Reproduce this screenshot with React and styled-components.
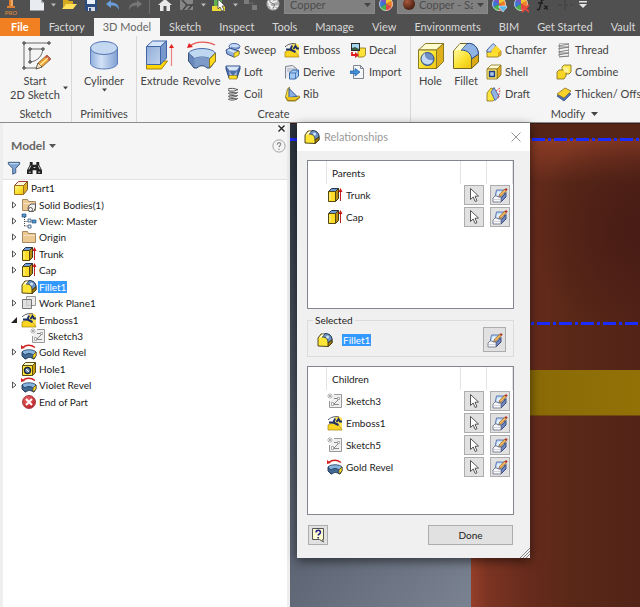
import React from 'react';
import styled, { createGlobalStyle } from 'styled-components';

const GlobalStyle = createGlobalStyle`
  * {
    box-sizing: border-box;
  }
  body {
    margin: 0;
    font-family: Lato, "Open Sans", sans-serif;
    font-size: 11px;
    line-height: 14px;
    color: #444;
  }
  button, select {
    font: inherit;
    color: inherit;
    border: none;
    background: none;
    padding: 0;
    margin: 0;
  }
`

const Page = styled.div`
  display: flex;
  flex-direction: column;
  min-height: 100vh;
  overflow: hidden;
`

const Svg = styled.svg`
  display: block;
  flex: none;
`

/* ---------- icons ---------- */

const Icon = ({ size = 16, box = 16, children }) => (
  <Svg width={size} height={size} viewBox={`0 0 ${box} ${box}`} aria-hidden="true">{children}</Svg>
)

const Caret = ({ color = '#444', width = 7 }) => (
  <Svg width={width} height="4" viewBox="0 0 7 4" aria-hidden="true"><path d="M0 0h7L3.5 4z" fill={color} /></Svg>
)

const Gradients = () => (
  <Svg width="0" height="0" aria-hidden="true">
    <defs>
      <linearGradient id="blue" x1="0" y1="0" x2="1" y2="0">
        <stop offset="0" stopColor="#8fb0de" />
        <stop offset="0.4" stopColor="#d3e2f6" />
        <stop offset="1" stopColor="#7f9fd2" />
      </linearGradient>
      <linearGradient id="steel" x1="0" y1="0" x2="1" y2="1">
        <stop offset="0" stopColor="#8fadd8" />
        <stop offset="1" stopColor="#c0d2ec" />
      </linearGradient>
      <linearGradient id="gold" x1="0" y1="0" x2="1" y2="1">
        <stop offset="0" stopColor="#fff79a" />
        <stop offset="0.5" stopColor="#fbe334" />
        <stop offset="1" stopColor="#eec40c" />
      </linearGradient>
      <radialGradient id="ball" cx="0.35" cy="0.3" r="0.8">
        <stop offset="0" stopColor="#a8593c" />
        <stop offset="1" stopColor="#3c160c" />
      </radialGradient>
      <radialGradient id="red" cx="0.4" cy="0.35" r="0.7">
        <stop offset="0" stopColor="#ef6a6a" />
        <stop offset="1" stopColor="#b41c24" />
      </radialGradient>
    </defs>
  </Svg>
)

const SketchBig = () => (
  <Icon size={30} box={30}>
    <path d="M3 3h25M3 3v25h12M9 9h13M9 9v13M22 9c-1 7-5 12-13 13" fill="none" stroke="#666" />
    <path d="M2 2h2v2H2zM27 2h2v2h-2zM2 27h2v2H2zM8 8h2v2H8zM21 8h2v2h-2zM8 21h2v2H8z" fill="#fff" stroke="#333" />
    <path d="M15 29l2-6 9-8 4 4-9 8z" fill="#f0a030" stroke="#6a5030" strokeWidth="0.7" />
    <path d="M24 17l2-2 4 4-2 2z" fill="#c85a48" />
    <path d="M15 29l2-6 4 4z" fill="#f6e2c0" stroke="#444" strokeWidth="0.7" />
    <path d="M19 25l8-7" stroke="#fff0a8" strokeWidth="1.400" />
  </Icon>
)

const CylinderBig = () => (
  <Icon size={30} box={30}>
    <path d="M1.500 8v15c0 3.500 6 6 13.500 6s13.500-2.500 13.500-6V8" fill="url(#blue)" stroke="#5a7cb8" />
    <ellipse cx="15" cy="8" rx="13.500" ry="6.500" fill="#c4d8f2" stroke="#5273b0" />
  </Icon>
)

const ExtrudeBig = () => (
  <Icon size={30} box={30}>
    <path d="M1.500 25l6-4h15l-6 8h-15z" fill="#ffd600" stroke="#a08010" />
    <path d="M1.500 6.500h14v18h-14z" fill="url(#steel)" stroke="#3f64a8" />
    <path d="M1.500 6.500l6-5.500h14l-6 5.500z" fill="#d6e6fa" stroke="#3f64a8" />
    <path d="M15.500 6.500l6-5.500v17l-6 6.500z" fill="#7898cc" stroke="#3f64a8" />
    <path d="M26.500 26V7" stroke="#f08080" strokeWidth="1.200" />
    <path d="M26.500 4l2.500 4h-5z" fill="#e02020" />
  </Icon>
)

const RevolveBig = () => (
  <Icon size={30} box={30}>
    <path d="M1.500 13v8l5.500 7h3c3-3 7-3 10 0h3l5.500-7v-8z" fill="#6788b8" stroke="#35517e" />
    <path d="M1.500 13c4-6 23-6 27 0l-6 5.500c-4-2-11-2-15 0z" fill="#c0d7f2" stroke="#4a6ca8" />
    <path d="M7.500 18.500c4-2 11-2 15 0V27h-3c-3-3-6-3-9 0h-3z" fill="#7c9bc8" />
    <path d="M22.500 19l6-6v8l-6 7z" fill="#ffd91a" stroke="#8a7820" />
    <path d="M3 6c6-5 18-5 25-1" fill="none" stroke="#e85a5a" strokeWidth="1.300" />
    <path d="M0 8l2-5 4 4z" fill="#e02020" />
  </Icon>
)

const HoleBig = () => (
  <Icon size={28} box={28}>
    <path d="M1.500 8l7-6.500h18l-7 6.500z" fill="#fffbd0" stroke="#8a7a20" />
    <path d="M19.500 8l7-6.500v18l-7 7z" fill="#dfaf1c" stroke="#8a7a20" />
    <path d="M1.500 8h18v18.500h-18z" fill="url(#gold)" stroke="#8a7a20" />
    <circle cx="10.500" cy="17" r="6.500" fill="#6d8fc6" stroke="#2c4a86" />
    <path d="M8 11c-1 5 4 8 8 7-1 5-8 6-11 1-1-3 0-6 3-8z" fill="#c4d9f4" />
  </Icon>
)

const FilletBig = () => (
  <Icon size={28} box={28}>
    <path d="M1.500 26.500V9L8 1.500h10c5 1 8 5 8.500 10v8l-7 7z" fill="#ffee44" stroke="#6f6524" />
    <path d="M19.500 26.500V17l7-5v8z" fill="#dba916" stroke="#6f6524" />
    <path d="M9 8l6-6.500c7-1 11 4 11.500 10.500l-7 5c0-5-4-9-10.500-9z" fill="#8fb3e2" stroke="#27488c" />
    <path d="M2 9l6-7h6L9 8z" fill="#fffdd8" />
    <path d="M2 26V10c9-3 16 1 17 8v8z" fill="url(#gold)" />
  </Icon>
)

const Sweep = () => (
  <Icon>
    <path d="M4 4.500c0-4 10-4 11 0l-1 2-5 1-4-1z" fill="#c9dcf6" stroke="#4261a4" />
    <path d="M6 5c2 1.500 6 1.500 8 0" fill="none" stroke="#5a7aba" />
    <path d="M1 8l4-2 9 3v3l-5 3-7-3z" fill="#8faedc" stroke="#35508c" />
    <path d="M2 8l3-1 7 3-3 1z" fill="#d3e3f8" />
    <path d="M9 11l5-2v4l-5 2.500z" fill="#ffe02a" stroke="#8b7420" strokeWidth="0.700" />
  </Icon>
)
const Loft = () => (
  <Icon>
    <path d="M1 2h14v3l-3 9H4L1 5z" fill="#4e6ea8" stroke="#304c88" />
    <path d="M1.500 2.500h13l-3 4h-7z" fill="#d7e5f8" />
    <path d="M4 7l4 5 4-5-1 7H5z" fill="#9fbce6" />
    <path d="M4 11.500h8V15H4z" fill="#ffdf25" stroke="#8b7420" strokeWidth="0.700" />
  </Icon>
)
const Coil = () => (
  <Icon>
    <path d="M3 4c3 2 8 1 10-1M3 7c3 2 8 1 10-1M3 10c3 2 8 1 10-1M3 13c3 2 8 1 10-1M3 3c2-1 7-1 10 1M4 6l8 1M4 9l8 1M4 12l8 1" fill="none" stroke="#555" />
  </Icon>
)
const Emboss = () => (
  <Icon>
    <path d="M8 2c3-1 5-.5 7 1v12c-1-4-4-6-8-7z" fill="#ffe452" />
    <path d="M1 15V10c3-2 6-2 9-.5 3 1.500 4 3 5 5.500z" fill="#fbd51e" stroke="#a58212" strokeWidth="0.700" />
    <path d="M1 5c3-3 7-4 11-3" fill="none" stroke="#3a4050" strokeWidth="0.900" />
    <path d="M2 7.500h4.500L8 3.500M6.500 7.500l5 2.500M9.500 7l2-3 1.500 2.500h2" fill="none" stroke="#1f3064" strokeWidth="2" />
  </Icon>
)
const Derive = () => (
  <Icon>
    <path d="M1.500 14.500v-12l7-1 4 3v3" fill="#e6eaf0" stroke="#7d8590" />
    <path d="M3 5h9M3 7h4" stroke="#a4acb8" />
    <path d="M5.500 9l3-3h6v6l-3 3h-6z" fill="#a5caf2" stroke="#3468ac" />
    <path d="M5.500 9h6v6M11.500 9l3-3" fill="none" stroke="#3468ac" strokeWidth="0.800" />
  </Icon>
)
const Rib = () => (
  <Icon>
    <path d="M1.500 11l2-8 2-2v10l10-1v2l-4 3h-8z" fill="#ffe238" stroke="#86701c" strokeWidth="0.800" />
    <path d="M5 2.500l8 8-8 1z" fill="#8db0e2" stroke="#2f559c" />
    <path d="M1.500 11l2.500 3.500h7l4-3" fill="#f1c51a" stroke="#86701c" strokeWidth="0.800" />
  </Icon>
)
const Decal = () => (
  <Icon>
    <path d="M8 8l2-2h5.500v7l-2 2H8z" fill="#ffe238" stroke="#86701c" strokeWidth="0.800" />
    <rect x="1.500" y="1.500" width="8" height="7" fill="#a4d8f0" stroke="#2b2b2b" />
    <path d="M2 8V6l3-1 4 2v1z" fill="#3c5c44" />
    <path d="M2 10v3h4" fill="none" stroke="#dc2020" strokeWidth="1.800" />
    <path d="M5 10l4 3-4 3z" fill="#dc2020" />
  </Icon>
)
const Import = () => (
  <Icon>
    <path d="M3.500 1.500h7l3 3v10h-10z" fill="#f4f6fa" stroke="#7d8590" />
    <path d="M10.500 1.500v3h3" fill="none" stroke="#7d8590" />
    <path d="M0 7h5V4.500L10 8l-5 4V9.500H0z" fill="#3f8fd8" stroke="#1d5ca0" strokeWidth="0.700" />
  </Icon>
)
const Chamfer = () => (
  <Icon>
    <path d="M1 8l5-5 4 1 5 5v4l-3 2H1z" fill="#ffe030" stroke="#86701c" strokeWidth="0.800" />
    <path d="M1 8l6-6.500 3 2.500-5 6H1z" fill="#b9d0f0" stroke="#35549a" strokeWidth="0.800" />
    <path d="M5 9l5-5.500 5 5-3 2.500H8z" fill="#ffd92a" />
    <path d="M12 11l3-2.500V13l-3 2z" fill="#dba81a" />
  </Icon>
)
const Shell = () => (
  <Icon>
    <path d="M1 5l4-4h10l-4 4z" fill="#fffbd0" stroke="#86701c" strokeWidth="0.800" />
    <path d="M11 5l4-4v10l-4 4z" fill="#e0ab1c" stroke="#86701c" strokeWidth="0.800" />
    <path d="M1 5h10v10H1z" fill="#ffe96a" stroke="#86701c" strokeWidth="0.800" />
    <path d="M3.500 7.500h5v5h-5z" fill="#a8c5ee" stroke="#213f80" strokeWidth="1.400" />
  </Icon>
)
const Draft = () => (
  <Icon>
    <path d="M1 15V7l4-5 3 1 2 9-3 3z" fill="#ffe540" stroke="#86701c" strokeWidth="0.800" />
    <path d="M5 6l3-4.500 5 9-4 4z" fill="#93b4e4" stroke="#35549a" strokeWidth="0.800" />
    <path d="M10 5l4-3M12 12l2-8" stroke="#e04040" strokeDasharray="2 1" />
  </Icon>
)
const Thread = () => (
  <Icon>
    <path d="M3.500 1.500h9v13h-9z" fill="#f2f2f2" stroke="#999" strokeWidth="0.700" />
    <path d="M2 4l11-2M2 7l11-2M2 10l11-2M2 13l11-2M3 15l10-1M3 5l10 0M3 11h10" stroke="#777" strokeWidth="0.900" />
  </Icon>
)
const Combine = () => (
  <Icon>
    <path d="M6 3l2-2h7v7l-2 2H6z" fill="#ffe74c" stroke="#7c6a1c" strokeWidth="0.800" />
    <path d="M1 8l2-2h7v6l-2 3H1z" fill="#f8d422" stroke="#7c6a1c" strokeWidth="0.800" />
    <path d="M6.500 3.500h6v5h-4z" fill="#fff394" />
  </Icon>
)
const Thicken = () => (
  <Icon>
    <path d="M1 10l7-5 7 3-7 7z" fill="#4e70b4" stroke="#2e4a86" strokeWidth="0.800" />
    <path d="M1 8l8-6 6 3-7 7z" fill="#fbd22c" stroke="#86701c" strokeWidth="0.800" />
  </Icon>
)

const Part = () => (
  <Icon>
    <path d="M1.500 5.500l4-4h9l-4 4z" fill="#fff6dc" stroke="#a03a30" />
    <path d="M10.500 5.500l4-4v8l-4 5z" fill="#e0b020" stroke="#7a5a20" />
    <path d="M1.500 5.500h9v9h-9z" fill="url(#gold)" stroke="#a07020" />
  </Icon>
)
const Folder = ({ bodies }) => (
  <Icon>
    <path d="M1.500 13.500v-11h5l1 2h7v9z" fill="#ecc992" stroke="#a88a62" />
    <path d="M2 6.500h12" stroke="#f8e4c4" />
    {bodies && <path d="M7.500 9l2.500-2h4.500v4l-2 3.500H8l-1-3z" fill="#f0f0f0" stroke="#555" />}
    {bodies && <circle cx="9.500" cy="12.500" r="2" fill="#fff" stroke="#555" />}
  </Icon>
)
const ViewTree = () => (
  <Icon>
    <path d="M3.500 4v9M3.500 8.500h5M3.500 13h4" stroke="#444" strokeDasharray="1 1" fill="none" />
    <path d="M1 1h4v3H1zM11 7h4v3h-4z" fill="#4a9ad8" stroke="#2b4f78" strokeWidth="0.700" />
    <path d="M7 6h3v3H7zM7 12h3v3H7z" fill="#e8f0fa" stroke="#2b4f78" strokeWidth="0.800" />
  </Icon>
)
const Extrude = () => (
  <Icon>
    <path d="M1.500 4.500l3-3h7l-3 3z" fill="#6f9bd4" stroke="#23354e" />
    <path d="M8.500 4.500l3-3v10l-3 3z" fill="#b78a12" stroke="#453a10" />
    <path d="M1.500 4.500h7v10h-7z" fill="#ffdd28" stroke="#554812" />
    <path d="M3 6v7" stroke="#fff6a0" />
    <path d="M13.500 14V4" stroke="#c02020" />
    <path d="M13.500 1l2 4h-4z" fill="#c81818" />
  </Icon>
)
const Fillet = () => (
  <Icon>
    <path d="M1 14V6l3-4h6c3 1 5 3 5 6v3l-4 3.500z" fill="#ffe636" stroke="#3c3510" strokeWidth="0.900" />
    <path d="M5 5l3-3.500c4 0 7 2 7 6.500l-4 3c0-4-2-6-6-6z" fill="#6d94c4" stroke="#1c2c48" strokeWidth="0.900" />
    <path d="M11 14.500V11l4-3v3z" fill="#a97f10" stroke="#3c3510" strokeWidth="0.900" />
    <path d="M2 6l3-3.500h2L5 5z" fill="#fff" />
    <circle cx="10.500" cy="5" r="1.500" fill="#d0e2f4" />
  </Icon>
)
const WorkPlane = () => (
  <Icon>
    <path d="M5.500 1.500h9v9h-9z" fill="#ececec" stroke="#999" />
    <path d="M1.500 4.500h9v9h-9z" fill="#d4d4d4" fillOpacity="0.700" stroke="#777" />
  </Icon>
)
const SketchSmall = () => (
  <Icon>
    <path d="M7 1.500h7.500v13h-12V8" fill="#f0f0f0" stroke="#999" />
    <path d="M6 11.500h6M7 11l5-5M7 5.500h5" stroke="#888" fill="none" />
    <path d="M1 1l4 4M5 1L1 5M3 0v6M0 3h6" stroke="#a4a4a4" strokeWidth="0.800" />
    <path d="M4.500 9.500h2v3h-2zM10.500 4.500h2v2h-2z" fill="#fff" stroke="#999" strokeWidth="0.800" />
  </Icon>
)
const Revolve = () => (
  <Icon>
    <path d="M1 8v4l3 3h1c2-2 5-2 7 0h1l2-3V8z" fill="#416994" stroke="#1c2f4c" strokeWidth="0.900" />
    <path d="M1 8c2-3 12-3 14 0l-3 3c-2-2-6-2-8 0z" fill="#86b4de" stroke="#213a5c" strokeWidth="0.800" />
    <path d="M12 11l3-3v4l-3 3z" fill="#ffdf30" stroke="#584c14" strokeWidth="0.700" />
    <path d="M2 3.500c3-3 8-3 12 0" stroke="#d02020" strokeWidth="1.500" fill="none" />
    <path d="M0 5V1l4 3z" fill="#d02020" />
  </Icon>
)
const Hole = () => (
  <Icon>
    <path d="M1.500 4.500l3-3h10l-3 3z" fill="#fffbc8" stroke="#5b4f14" />
    <path d="M11.500 4.500l3-3v10l-3 3z" fill="#cc9c14" stroke="#5b4f14" />
    <path d="M1.500 4.500h10v10h-10z" fill="#ffe636" stroke="#5b4f14" />
    <circle cx="6.500" cy="9.500" r="3" fill="#7e9cc4" stroke="#1b2538" strokeWidth="1.400" />
    <path d="M5 8l3 3" stroke="#fff" />
  </Icon>
)
const EndOfPart = () => (
  <Icon>
    <circle cx="8" cy="8" r="6.500" fill="url(#red)" stroke="#a8484c" />
    <path d="M5 5l6 6M11 5l-6 6" stroke="#fff" strokeWidth="2" />
  </Icon>
)
const Filter = () => (
  <Icon size={14}>
    <path d="M1.500 1.500h13v2L10 8.500v5L6.500 15V8.500L1.500 3.500z" fill="#7fa6d4" stroke="#35527c" />
    <path d="M3 3h10" stroke="#d5e5f6" />
  </Icon>
)
const Binoculars = () => (
  <Icon size={15}>
    <path d="M3 2h3v3h4V2h3v3l3 6v4h-6v-4H6v4H0v-4l3-6z" fill="#222" />
    <path d="M2 10l2-4M14 10l-2-4M7 8h2M2 13h2M12 13h2" stroke="#ddd" />
  </Icon>
)
const Cursor = () => (
  <Icon>
    <path d="M4.500 1.500v11l2.700-2.500 2 4.500 1.800-.8-2-4.400 3.500-.3z" fill="#fff" stroke="#444" strokeWidth="0.900" strokeLinejoin="round" />
  </Icon>
)
const EditFeature = () => (
  <Icon>
    <path d="M4.500 3h8v6l-3 1H3z" fill="#b4d3f6" stroke="#5570ac" strokeWidth="0.900" />
    <path d="M5.500 4.500h4l-1 4h-4z" fill="#e4f0fc" />
    <path d="M9 11l5-5.500V10l-5 5z" fill="#7388bc" stroke="#304480" strokeWidth="0.900" />
    <path d="M1 11l2-2h2l1 1h3v5H1z" fill="#fafafc" stroke="#74798f" strokeWidth="0.900" />
    <path d="M2 12.500h6" stroke="#d0d2dc" />
    <path d="M7 9.500l.7-2.500L13 2l1.700 1.500L9.500 9z" fill="#f2b45a" stroke="#7a5524" strokeWidth="0.600" />
    <path d="M12.500 2.500L14 1l1.700 1.500L14.200 4z" fill="#b3362c" />
  </Icon>
)

const QuickSvg = ({ children }) => (
  <Svg width="16" height="14" viewBox="0 0 16 14" aria-hidden="true">{children}</Svg>
)

const Wheel = ({ children }) => (
  <QuickSvg>
    <path d="M8 4V-3A7 7 0 0 1 14 1z" fill="#f2c62c" />
    <path d="M8 4V-3A7 7 0 0 0 2 1z" fill="#7855c4" />
    <path d="M8 4l6-3.500a7 7 0 0 1 0 7z" fill="#f07e28" />
    <path d="M8 4l6 3.500A7 7 0 0 1 8 11z" fill="#e04848" />
    <path d="M8 4v7a7 7 0 0 1-6-3.500z" fill="#48b14c" />
    <path d="M8 4L2 7.500a7 7 0 0 1 0-7z" fill="#3a78d4" />
    <circle cx="8" cy="4" r="6.500" fill="none" stroke="#d8d8d8" strokeWidth="0.800" />
    {children}
  </QuickSvg>
)

/* ---------- quick access bar ---------- */

const QuickBar = styled.div`
  display: flex;
  height: 18px;
  overflow: hidden;
  background: #505050;
`

const QuickButton = styled.button`
  flex: none;
  display: flex;
  justify-content: center;
  width: ${p => p.$narrow ? 10 : 22}px;
  ${p => p.$narrow && 'align-items: center;'}
  height: ${p => p.$narrow ? 10 : 18}px;
`

const Logo = styled.div`
  display: flex;
  flex-direction: column;
  align-items: center;
  flex: none;
  width: 22px;
  margin-right: 4px;
  font-size: 6px;
  font-weight: bold;
  line-height: 8px;
  color: #c98040;
`

const Divider = styled.div`
  flex: none;
  width: 1px;
  height: 14px;
  margin: 0 4px 0 3px;
  background: #6e6e6e;
`

const PickerWrap = styled.label`
  flex: none;
  display: flex;
  align-items: center;
  gap: 4px;
  width: 91px;
  height: 14px;
  padding: 0 3px 4px 5px;
  border: 1px solid #8a8a8a;
  border-top: none;
  background: #808080;
`

const Picker = styled.select`
  flex: 1;
  min-width: 0;
  height: 12px;
  line-height: 12px;
  appearance: none;
  color: #4c4c4c;
`

const QuickAccess = () => (
  <QuickBar>
    <Logo>
      <Svg width="10" height="9" viewBox="0 0 10 9" aria-hidden="true">
        <path d="M3 0h4v6h2v2H1V6h2z" fill="#d98032" />
        <path d="M5 0h2v6H5z" fill="#f0a860" />
      </Svg>
      PRO
    </Logo>
    <QuickButton aria-label="New"><QuickSvg><path d="M1 0h11l3 3v7.500H1z" fill="#e8ecf0" /><path d="M12 0v3h3" fill="#a8b0b8" /></QuickSvg></QuickButton>
    <QuickButton $narrow aria-label="New options"><Caret color="#bbb" width={5} /></QuickButton>
    <QuickButton aria-label="Open"><QuickSvg><path d="M2 0h5l1 1h4v4H4l-2 4z" fill="#d8a820" /><path d="M1 9l4-5h11l-4 5z" fill="#ffe15a" /></QuickSvg></QuickButton>
    <QuickButton aria-label="Save"><QuickSvg><path d="M2 0h12v11H3l-1-1z" fill="#2c4d80" /><path d="M4 0h8v4H4z" fill="#eaf1fa" /><path d="M5 7h7v4H5z" fill="#d5dce6" /><path d="M6 8h2v3H6z" fill="#2c4d80" /></QuickSvg></QuickButton>
    <QuickButton aria-label="Undo"><QuickSvg><path d="M1 4l5-4v2.500c5 0 8 2 8 7.500-2-4-4-4.500-8-4.500V8z" fill="#6a9fdc" /></QuickSvg></QuickButton>
    <QuickButton aria-label="Redo"><QuickSvg><path d="M15 4l-5-4v2.500c-5 0-8 2-8 7.500 2-4 4-4.500 8-4.500V8z" fill="#777" /></QuickSvg></QuickButton>
    <Divider />
    <QuickButton aria-label="Home"><QuickSvg><path d="M1 5l7-6 7 6h-2v6h-3.500V6h-3v5H3V5z" fill="#e9e9e9" /></QuickSvg></QuickButton>
    <QuickButton aria-label="Appearance"><QuickSvg><path d="M1 0h13v10H1z" fill="#858585" /><path d="M3 0l5 5-4 5M8 5h6M9 10l5-6" stroke="#444" strokeWidth="1.500" fill="none" /></QuickSvg></QuickButton>
    <QuickButton $narrow aria-label="Appearance options"><Caret color="#bbb" width={5} /></QuickButton>
    <QuickButton aria-label="Select"><QuickSvg><path d="M1 6h13v5H1z" fill="#ecd93a" /><path d="M3 0h8v6H3z" fill="#62b052" /><path d="M7 0v9l2-2 2 4 2-1-2-4h3L8 0z" fill="#fff" stroke="#333" strokeWidth="0.700" /></QuickSvg></QuickButton>
    <QuickButton $narrow aria-label="Select options"><Caret color="#bbb" width={5} /></QuickButton>
    <QuickButton aria-label="Links"><QuickSvg><path d="M1 0h5v4H1zM9 5h5v5H9z" fill="#7b7b7b" /><path d="M6 3h4v3" fill="none" stroke="#6a6a6a" /></QuickSvg></QuickButton>
    <QuickButton aria-label="Adjust"><QuickSvg><circle cx="8" cy="4" r="6.500" fill="#b0b0b0" /><path d="M3 1l4 8M8-1l-4 6 7 4M12 1l-6 2M13 6l-6 1" stroke="#f2f2f2" strokeWidth="1.400" fill="none" /><path d="M5 2l5 3-2 3" stroke="#777" fill="none" /></QuickSvg></QuickButton>
    <PickerWrap>
      <Picker aria-label="Material" defaultValue="Copper"><option>Copper</option></Picker>
      <Caret color="#444" />
    </PickerWrap>
    <QuickButton aria-label="Appearance browser"><Wheel /></QuickButton>
    <PickerWrap>
      <Svg width="12" height="12" viewBox="0 0 12 12" aria-hidden="true"><circle cx="6" cy="5" r="6" fill="url(#ball)" /></Svg>
      <Picker aria-label="Appearance" defaultValue="Copper - Sa"><option>Copper - Sa</option></Picker>
      <Caret color="#444" />
    </PickerWrap>
    <QuickButton aria-label="Adjust appearance"><Wheel><path d="M8 6h8v2h-1l-3 4-3-4H8z" fill="#58b8ec" stroke="#fff" strokeWidth="0.500" /></Wheel></QuickButton>
    <QuickButton aria-label="Clear appearance"><Wheel><path d="M9 5l7 7M16 5l-7 7" stroke="#e8483c" strokeWidth="1.800" /></Wheel></QuickButton>
    <QuickButton aria-label="Parameters"><QuickSvg><path d="M9 0C6-1 6 3 5 7s-2 3-3 2M3 3h5M9 6c2-1 2 4 4 3M13 6l-4 3" fill="none" stroke="#1e1e1e" strokeWidth="1.300" /></QuickSvg></QuickButton>
    <QuickButton aria-label="Add"><QuickSvg><path d="M8 0v11M1 5h14" stroke="#3f3f3f" strokeDasharray="4 2" /></QuickSvg></QuickButton>
    <QuickButton aria-label="Customize"><QuickSvg><path d="M0 1h8v1.500H0zM0 4h8L4 8z" fill="#e6e6e6" /></QuickSvg></QuickButton>
  </QuickBar>
)

/* ---------- ribbon ---------- */

const Tabs = styled.nav`
  display: flex;
  height: 18px;
  overflow: hidden;
  background: #505050;
`

const Tab = styled.button`
  flex: none;
  padding: 0 9px;
  white-space: nowrap;
  line-height: 18px;
  color: #d8d8d8;
  ${p => p.$active && 'background: #f5f5f5; color: #666;'}
  ${p => p.$file && 'background: #f08022; color: #fff; font-weight: bold; padding: 0 11px;'}
`

const Ribbon = styled.div`
  display: flex;
  height: 87px;
  overflow: hidden;
  background: #f5f5f5;
  border-bottom: 1px solid #8c8c8c;
`

const Panel = styled.section`
  flex: none;
  display: flex;
  flex-direction: column;
  width: ${p => p.$width}px;
  border-right: 1px solid #d8d8d8;
`

const PanelTools = styled.div`
  display: flex;
  flex: 1;
  justify-content: ${p => p.$start ? 'flex-start' : 'center'};
  gap: 4px;
  padding: 4px 4px 0;
`

const PanelTitle = styled.div`
  display: flex;
  align-items: center;
  justify-content: center;
  gap: 6px;
  height: 17px;
  line-height: 16px;
`

const BigButton = styled.button`
  display: flex;
  flex-direction: column;
  align-items: center;
  flex: none;
  width: ${p => p.$width}px;
  height: 64px;
  line-height: 14px;
  white-space: nowrap;
`

const BigIcon = styled.span`
  display: flex;
  align-items: flex-end;
  height: 30px;
`

const BigLabel = styled.span`
  display: flex;
  align-items: center;
  gap: 3px;
  margin-top: 4px;
  padding-left: ${p => p.$split ? 7 : 0}px;
`

const SmallColumn = styled.div`
  display: flex;
  flex-direction: column;
  flex: none;
  width: ${p => p.$width}px;
`

const SmallButton = styled.button`
  display: flex;
  align-items: center;
  gap: 3px;
  height: 22px;
  padding-bottom: 2px;
  white-space: nowrap;
`

const tabs = ['Factory', '3D Model', 'Sketch', 'Inspect', 'Tools', 'Manage', 'View', 'Environments', 'BIM', 'Get Started', 'Vault'];

const createColumns = [
  { width: 55, items: [['Sweep', Sweep], ['Loft', Loft], ['Coil', Coil]] },
  { width: 62, items: [['Emboss', Emboss], ['Derive', Derive], ['Rib', Rib]] },
  { width: 60, items: [['Decal', Decal], ['Import', Import]] },
];

const modifyColumns = [
  { width: 66, items: [['Chamfer', Chamfer], ['Shell', Shell], ['Draft', Draft]] },
  { width: 110, items: [['Thread', Thread], ['Combine', Combine], ['Thicken/ Offs', Thicken]] },
];

const SmallTools = ({ columns }) => columns.map((column) => (
  <SmallColumn key={column.width} $width={column.width}>
    {column.items.map(([name, Glyph]) => (
      <SmallButton key={name}><Glyph />{name}</SmallButton>
    ))}
  </SmallColumn>
))

const RibbonBar = () => (
  <Ribbon>
    <Panel $width={72}>
      <PanelTools>
        <BigButton $width={68}>
          <BigIcon><SketchBig /></BigIcon>
          <BigLabel $split><span>Start<br />2D Sketch</span><Caret width={5} /></BigLabel>
        </BigButton>
      </PanelTools>
      <PanelTitle>Sketch</PanelTitle>
    </Panel>
    <Panel $width={65}>
      <PanelTools>
        <BigButton $width={56}>
          <BigIcon><CylinderBig /></BigIcon>
          <BigLabel>Cylinder</BigLabel>
          <Caret width={5} />
        </BigButton>
      </PanelTools>
      <PanelTitle>Primitives</PanelTitle>
    </Panel>
    <Panel $width={274}>
      <PanelTools $start>
        <BigButton $width={37}>
          <BigIcon><ExtrudeBig /></BigIcon>
          <BigLabel>Extrude</BigLabel>
        </BigButton>
        <BigButton $width={39}>
          <BigIcon><RevolveBig /></BigIcon>
          <BigLabel>Revolve</BigLabel>
        </BigButton>
        <SmallTools columns={createColumns} />
      </PanelTools>
      <PanelTitle>Create</PanelTitle>
    </Panel>
    <Panel $width={328}>
      <PanelTools $start>
        <BigButton $width={31}>
          <BigIcon><HoleBig /></BigIcon>
          <BigLabel>Hole</BigLabel>
        </BigButton>
        <BigButton $width={32}>
          <BigIcon><FilletBig /></BigIcon>
          <BigLabel>Fillet</BigLabel>
        </BigButton>
        <SmallTools columns={modifyColumns} />
      </PanelTools>
      <PanelTitle>Modify <Caret /></PanelTitle>
    </Panel>
  </Ribbon>
)

/* ---------- model browser ---------- */

const Workspace = styled.main`
  display: flex;
  flex: 1;
`

const Browser = styled.aside`
  display: flex;
  flex-direction: column;
  flex: none;
  width: 290px;
  border: solid #eee;
  border-width: 0 3px;
  background: #fff;
`

const BrowserHead = styled.header`
  display: flex;
  justify-content: space-between;
  height: 57px;
  padding: 0 1px 0 4px;
  background: #f5f5f5;
  border-bottom: 1px solid #e2e2e2;
`

const HeadColumn = styled.div`
  display: flex;
  flex-direction: column;
  align-items: ${p => p.$end ? 'flex-end' : 'flex-start'};
  gap: 6px;
  padding-top: ${p => p.$end ? 1 : 15}px;
`

const BrowserTitle = styled.button`
  display: flex;
  align-items: center;
  gap: 4px;
  padding-left: 4px;
  font-size: 12px;
  line-height: 16px;
  font-weight: bold;
  color: #666;
`

const HeadTools = styled.div`
  display: flex;
  gap: 6px;
`

const PlainButton = styled.button`
  display: flex;
  align-items: center;
  justify-content: center;
`

const Tree = styled.ul`
  display: grid;
  grid-auto-rows: 1fr;
  height: 230px;
  margin: 0;
  padding: 0;
  list-style: none;
  font-size: 10px;
  color: #222;
`

const TreeRow = styled.li`
  display: flex;
  align-items: center;
  gap: 1px;
  padding-left: ${p => [10, 5, 27][p.$level]}px;
`

const Expander = styled.span`
  display: flex;
  justify-content: center;
  width: 12px;
`

const Name = styled.span`
  padding: 0 1px;
  line-height: 12px;
  ${p => p.$selected && 'background: #3399ff; color: #fff;'}
`

const BodiesFolder = () => <Folder bodies />

const nodes = [
  { name: 'Part1', glyph: Part, level: 0 },
  { name: 'Solid Bodies(1)', glyph: BodiesFolder, level: 1, state: 'closed' },
  { name: 'View: Master', glyph: ViewTree, level: 1, state: 'closed' },
  { name: 'Origin', glyph: Folder, level: 1, state: 'closed' },
  { name: 'Trunk', glyph: Extrude, level: 1, state: 'closed' },
  { name: 'Cap', glyph: Extrude, level: 1, state: 'closed' },
  { name: 'Fillet1', glyph: Fillet, level: 1, selected: true },
  { name: 'Work Plane1', glyph: WorkPlane, level: 1, state: 'closed' },
  { name: 'Emboss1', glyph: Emboss, level: 1, state: 'open' },
  { name: 'Sketch3', glyph: SketchSmall, level: 2 },
  { name: 'Gold Revel', glyph: Revolve, level: 1, state: 'closed' },
  { name: 'Hole1', glyph: Hole, level: 1 },
  { name: 'Violet Revel', glyph: Revolve, level: 1, state: 'closed' },
  { name: 'End of Part', glyph: EndOfPart, level: 1 },
];

const ModelBrowser = () => (
  <Browser>
    <BrowserHead>
      <HeadColumn>
        <BrowserTitle>Model <Caret color="#555" /></BrowserTitle>
        <HeadTools>
          <PlainButton aria-label="Filter"><Filter /></PlainButton>
          <PlainButton aria-label="Find"><Binoculars /></PlainButton>
        </HeadTools>
      </HeadColumn>
      <HeadColumn $end>
        <PlainButton aria-label="Close browser">
          <Icon size={9} box={9}><path d="M1.500 1.500l6 6M7.500 1.500l-6 6" stroke="#222" strokeWidth="1.300" /></Icon>
        </PlainButton>
        <PlainButton aria-label="Help">
          <Icon size={14}>
            <circle cx="8" cy="8" r="7" fill="none" stroke="#999" />
            <path d="M6 6.500c0-3 4-3 4-.5 0 1.500-2 1.500-2 3.500M8 11v1.500" fill="none" stroke="#888" strokeWidth="1.300" />
          </Icon>
        </PlainButton>
      </HeadColumn>
    </BrowserHead>
    <Tree>
      {nodes.map(({ name, glyph: Glyph, level, state, selected }) => (
        <TreeRow key={name} $level={level}>
          {level === 1 && (
            <Expander>
              {state === 'closed' && <Svg width="5" height="8" viewBox="0 0 5 8" aria-hidden="true"><path d="M.5 1v6l3.500-3z" fill="#fff" stroke="#555" /></Svg>}
              {state === 'open' && <Svg width="6" height="6" viewBox="0 0 6 6" aria-hidden="true"><path d="M6 0v6H0z" fill="#222" /></Svg>}
            </Expander>
          )}
          <Glyph />
          <Name $selected={selected}>{name}</Name>
        </TreeRow>
      ))}
    </Tree>
  </Browser>
)

/* ---------- model view ---------- */

const Viewport = styled.section`
  position: relative;
  display: flex;
  flex: 1;
  border-top: 1px solid #3a1a14;
`

const Sky = styled.div`
  width: 181px;
  background: linear-gradient(100deg, rgba(40, 48, 60, 0.3), rgba(150, 160, 175, 0.35)), linear-gradient(#2b343f, #454d5a 40%, #6b7382);
`

const Copper = styled.div`
  display: flex;
  flex-direction: column;
  flex: 1;
  background: linear-gradient(90deg, #943f29, #7c3422 10%, #662b1c 35%, #5a2818 60%, #522317);
`

const Collar = styled.div`
  height: 15px;
  background: #552518;
`

const Body = styled.div`
  height: 183px;
  background:
    radial-gradient(ellipse 110px 110px at 100% 50%, #481c15, rgba(72, 28, 21, 0)),
    linear-gradient(rgba(150, 64, 40, 0.8), rgba(150, 64, 40, 0) 24%);
`

const AxisLine = styled.div`
  height: 3px;
  background: repeating-linear-gradient(90deg, #1a2cff 0 13px, transparent 13px 16px, #1a2cff 16px 19px, transparent 19px 22px);
`

const TopAxis = styled(AxisLine)`
  position: absolute;
  top: 14px;
  left: 0;
  right: 0;
`

const Stripe = styled.div`
  height: 46px;
  margin-top: 45px;
  background: linear-gradient(90deg, #846505, #927207);
  border-bottom: 1px solid #6f4a0c;
`

/* ---------- relationships dialog ---------- */

const Dialog = styled.div`
  position: absolute;
  top: -1px;
  left: 7px;
  width: 233px;
  background: #f0f0f0;
  box-shadow: 0 3px 10px rgba(0, 0, 0, 0.55);
`

const TitleBar = styled.header`
  display: flex;
  align-items: center;
  gap: 4px;
  height: 28px;
  padding: 0 9px 0 7px;
  background: #fff;
  color: #999;
`

const DialogTitle = styled.h1`
  flex: 1;
  margin: 0;
  font-size: 11px;
  font-weight: normal;
`

const DialogBody = styled.div`
  display: flex;
  flex-direction: column;
  gap: 10px;
  padding: 9px 16px 13px 10px;
  font-size: 10px;
  color: #222;
`

const ListBox = styled.div`
  height: 149px;
  background: #fff;
  border: 1px solid #82878f;
`

const Table = styled.table`
  width: 100%;
  table-layout: fixed;
  border-collapse: separate;
  border-spacing: 0;

  th, td {
    height: 22px;
    padding: 0;
    text-align: left;
    font-weight: normal;
  }
  th {
    height: 23px;
    border-right: 1px solid #e4e4e4;
  }
  th:nth-child(2) {
    padding-left: 5px;
  }
`

const Col = styled.col`
  width: ${p => p.$width ? `${p.$width}px` : 'auto'};
`

const FeatureCell = styled.span`
  display: flex;
  align-items: center;
  gap: ${p => p.$wide ? 9 : 3}px;
`

const IconButton = styled.button`
  display: flex;
  align-items: center;
  justify-content: center;
  width: ${p => p.$large ? 23 : 20}px;
  height: ${p => p.$large ? 25 : 20}px;
  margin-left: ${p => p.$large ? 0 : 3}px;
  background: #e1e1e1;
  border: 1px solid #adadad;
`

const Selected = styled.fieldset`
  display: flex;
  align-items: center;
  justify-content: space-between;
  height: 44px;
  min-width: 0;
  margin: -6px 0 -1px;
  padding: 0 7px 8px 9px;
  border: 1px solid #dcdcdc;

  legend {
    margin-left: -4px;
    padding: 0 2px;
    line-height: 14px;
  }
`

const DialogFooter = styled.footer`
  display: flex;
  justify-content: space-between;
  margin-left: 1px;
`

const DoneButton = styled.button`
  width: 85px;
  height: 20px;
  margin-right: 1px;
  background: #e1e1e1;
  border: 1px solid #adadad;
`

const HelpButton = styled(IconButton)`
  margin-left: 0;
`

const Grip = styled.div`
  position: absolute;
  right: 0;
  bottom: 0;
`

const parents = [['Trunk', Extrude], ['Cap', Extrude]];
const children = [['Sketch3', SketchSmall], ['Emboss1', Emboss], ['Sketch5', SketchSmall], ['Gold Revel', Revolve]];

const FeatureList = ({ title, rows }) => (
  <ListBox>
    <Table>
      <colgroup><Col $width={19} /><Col /><Col $width={26} /><Col $width={26} /></colgroup>
      <thead>
        <tr><th /><th>{title}</th><th /><th /></tr>
      </thead>
      <tbody>
        {rows.map(([name, Glyph]) => (
          <tr key={name}>
            <td />
            <td><FeatureCell><Glyph />{name}</FeatureCell></td>
            <td><IconButton aria-label={`Select ${name}`}><Cursor /></IconButton></td>
            <td><IconButton aria-label={`Edit ${name}`}><EditFeature /></IconButton></td>
          </tr>
        ))}
      </tbody>
    </Table>
  </ListBox>
)

const Relationships = () => (
  <Dialog role="dialog" aria-label="Relationships">
    <TitleBar>
      <Fillet />
      <DialogTitle>Relationships</DialogTitle>
      <PlainButton aria-label="Close">
        <Icon size={10} box={10}><path d="M.5.5l9 9M9.500.5l-9 9" stroke="#999" /></Icon>
      </PlainButton>
    </TitleBar>
    <DialogBody>
      <FeatureList title="Parents" rows={parents} />
      <Selected>
        <legend>Selected</legend>
        <FeatureCell $wide><Fillet /><Name $selected>Fillet1</Name></FeatureCell>
        <IconButton $large aria-label="Edit Fillet1"><EditFeature /></IconButton>
      </Selected>
      <FeatureList title="Children" rows={children} />
      <DialogFooter>
        <HelpButton aria-label="Help">
          <Icon>
            <path d="M2.500 1.500h11v11h-1l1 2.500-4-2.500h-7z" fill="#fffdd0" stroke="#555" />
            <path d="M6 5.500c0-3 4.500-3 4.500 0 0 1.500-2.300 1.500-2.300 3M8.200 10v1.500" fill="none" stroke="#20208c" strokeWidth="1.500" />
          </Icon>
        </HelpButton>
        <DoneButton>Done</DoneButton>
      </DialogFooter>
    </DialogBody>
    <Grip>
      <Icon size={11} box={11}><path d="M1 11L11 1M4 11l7-7M7 11l4-4" stroke="#888" /></Icon>
    </Grip>
  </Dialog>
)

export default () => (
  <Page>
    <GlobalStyle />
    <QuickAccess />
    <Tabs>
      <Tab $file>File</Tab>
      {tabs.map((name) => <Tab key={name} $active={name === '3D Model'}>{name}</Tab>)}
    </Tabs>
    <RibbonBar />
    <Workspace>
      <ModelBrowser />
      <Viewport>
        <Sky />
        <Copper>
          <Collar />
          <Body />
          <AxisLine />
          <Stripe />
        </Copper>
        <TopAxis />
        <Relationships />
      </Viewport>
    </Workspace>
    <Gradients />
  </Page>
)
